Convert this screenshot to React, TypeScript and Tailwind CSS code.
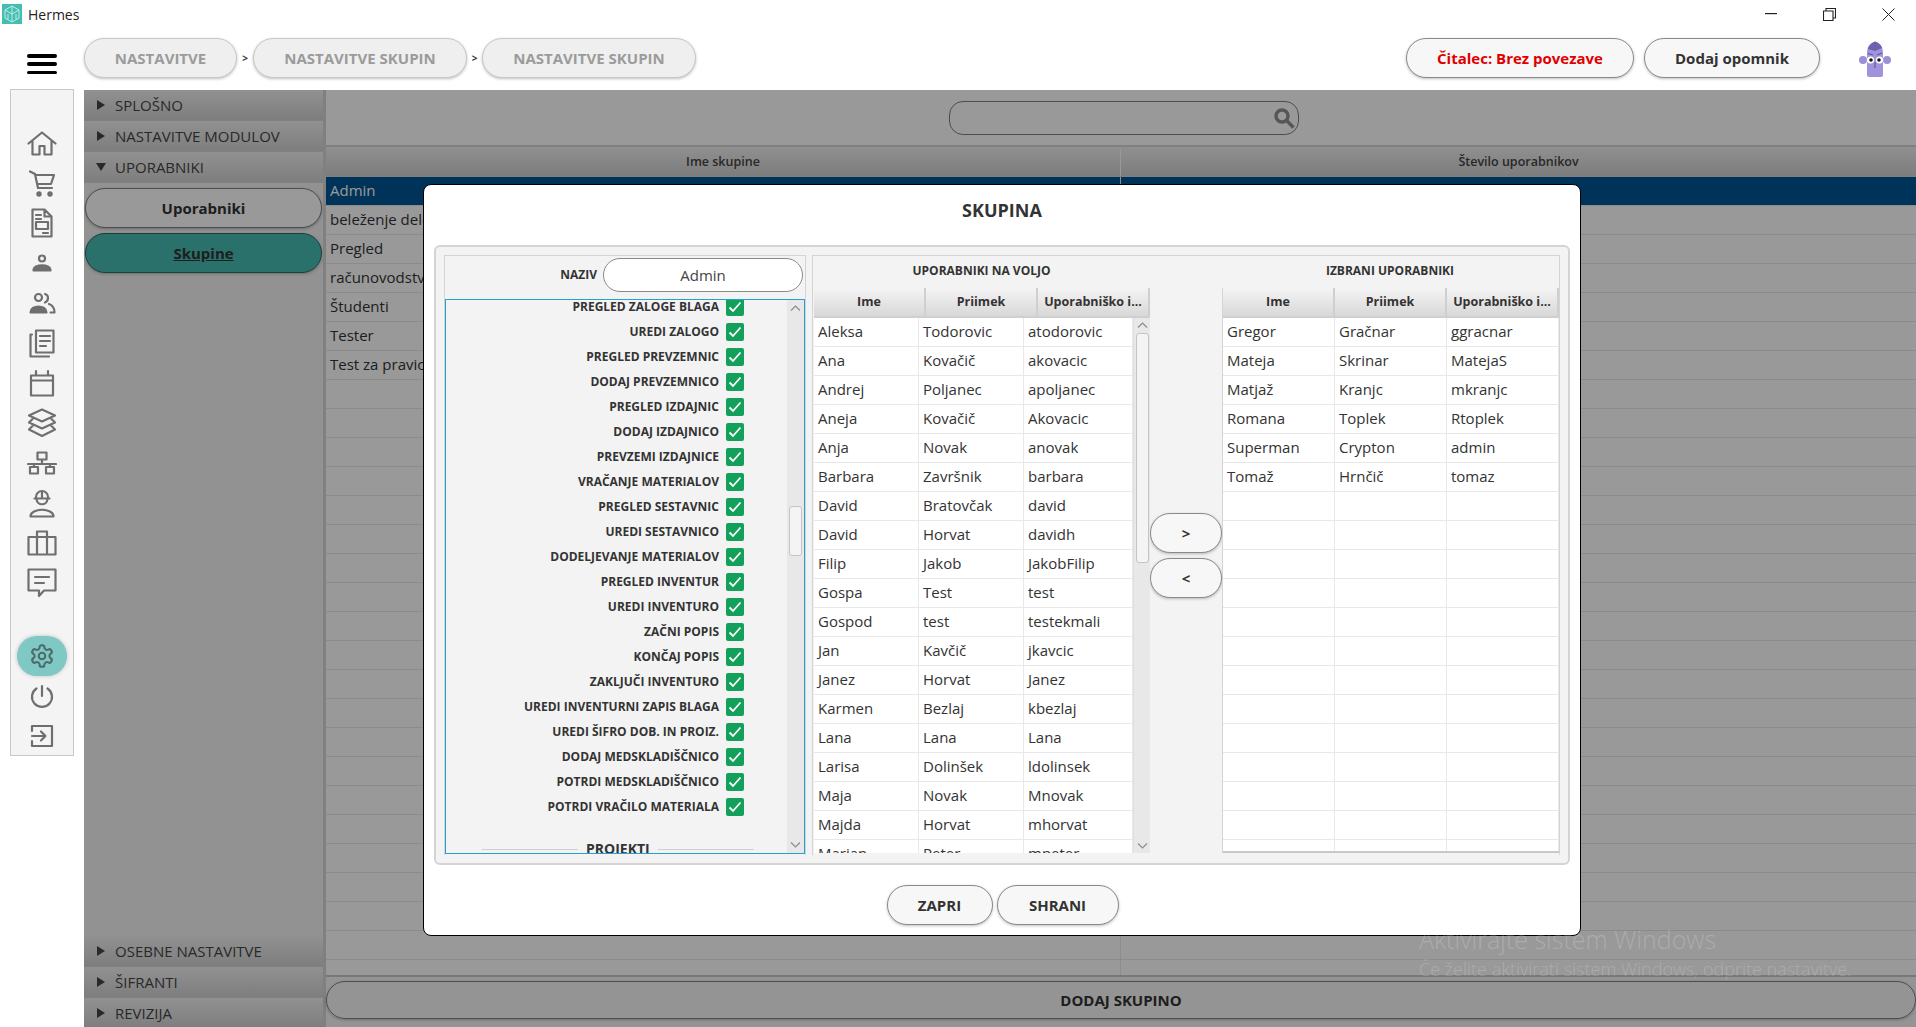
import type { ReactNode } from "react";

const permissions = [
	"PREGLED ZALOGE BLAGA",
	"UREDI ZALOGO",
	"PREGLED PREVZEMNIC",
	"DODAJ PREVZEMNICO",
	"PREGLED IZDAJNIC",
	"DODAJ IZDAJNICO",
	"PREVZEMI IZDAJNICE",
	"VRAČANJE MATERIALOV",
	"PREGLED SESTAVNIC",
	"UREDI SESTAVNICO",
	"DODELJEVANJE MATERIALOV",
	"PREGLED INVENTUR",
	"UREDI INVENTURO",
	"ZAČNI POPIS",
	"KONČAJ POPIS",
	"ZAKLJUČI INVENTURO",
	"UREDI INVENTURNI ZAPIS BLAGA",
	"UREDI ŠIFRO DOB. IN PROIZ.",
	"DODAJ MEDSKLADIŠČNICO",
	"POTRDI MEDSKLADIŠČNICO",
	"POTRDI VRAČILO MATERIALA",
];

const available = [
	["Aleksa", "Todorovic", "atodorovic"],
	["Ana", "Kovačič", "akovacic"],
	["Andrej", "Poljanec", "apoljanec"],
	["Aneja", "Kovačič", "Akovacic"],
	["Anja", "Novak", "anovak"],
	["Barbara", "Završnik", "barbara"],
	["David", "Bratovčak", "david"],
	["David", "Horvat", "davidh"],
	["Filip", "Jakob", "JakobFilip"],
	["Gospa", "Test", "test"],
	["Gospod", "test", "testekmali"],
	["Jan", "Kavčič", "jkavcic"],
	["Janez", "Horvat", "Janez"],
	["Karmen", "Bezlaj", "kbezlaj"],
	["Lana", "Lana", "Lana"],
	["Larisa", "Dolinšek", "ldolinsek"],
	["Maja", "Novak", "Mnovak"],
	["Majda", "Horvat", "mhorvat"],
	["Marian", "Peter", "mpeter"],
];

const selected = [
	["Gregor", "Gračnar", "ggracnar"],
	["Mateja", "Skrinar", "MatejaS"],
	["Matjaž", "Kranjc", "mkranjc"],
	["Romana", "Toplek", "Rtoplek"],
	["Superman", "Crypton", "admin"],
	["Tomaž", "Hrnčič", "tomaz"],
	...Array.from({ length: 13 }, () => ["", "", ""]),
];

const groups = [
	"Admin",
	"beleženje delovnega časa",
	"Pregled",
	"računovodstvo",
	"Študenti",
	"Tester",
	"Test za pravice",
	...Array.from({ length: 21 }, () => ""),
];

function Svg({ w, h, children }: { w: number; h: number; children: ReactNode }) {
	return (
		<svg
			width={w}
			height={h}
			viewBox={`0 0 ${w} ${h}`}
			fill="none"
			stroke="#6f6f6f"
			strokeWidth="2.2"
			strokeLinecap="round"
			strokeLinejoin="round">
			{children}
		</svg>
	);
}

const railIcons = [
	<Svg w={30} h={25} key="home">
		<path d="M1.500 12.500 15 1.500l13.500 11M5.500 10v13.500h7V15h5v8.500h7V10" />
	</Svg>,
	<Svg w={26} h={27} key="cart">
		<path d="M1 1.500 6 4l3 14h14M6 5h19l-3 9H8.500" />
		<circle cx="10" cy="24" r="1.600" fill="#6f6f6f" />
		<circle cx="21" cy="24" r="1.600" fill="#6f6f6f" />
	</Svg>,
	<Svg w={22} h={30} key="doc">
		<path d="M1.500 1.500h12l7 7v20h-19zM13.500 1.500v7h7M5 7h5M5 11h5M5 14h12v7H5zM12 25h5" />
	</Svg>,
	<Svg w={20} h={18} key="user">
		<circle cx="10" cy="4.500" r="3" />
		<path d="M1.500 16.500c0-7 17-7 17 0z" fill="#6f6f6f" />
	</Svg>,
	<Svg w={27} h={22} key="users">
		<circle cx="9.500" cy="5.500" r="3.500" />
		<path d="M1.500 20.500c0-8 16-8 16 0z" fill="#6f6f6f" />
		<path d="M16 2c4 1 4 7 0 8.500M20 12c3 1 5.500 3.500 5.500 8.500h-4" />
	</Svg>,
	<Svg w={26} h={29} key="news">
		<path d="M7 1.500h17.500v22H7zM3 5.500H1.500v22H20M11 7h10M11 12h10M11 17h6" />
	</Svg>,
	<Svg w={26} h={28} key="calendar">
		<path d="M2 6.500h22v20H2zM2 11.500h22M7 6.500V2M19 6.500V2" />
	</Svg>,
	<Svg w={30} h={30} key="layers">
		<path d="m15 1.500 13 6-13 6-13-6zM6 10.500l-4 4 13 6 13-6-4-4M6 17.500l-4 4 13 6.500 13-6.500-4-4" />
	</Svg>,
	<Svg w={30} h={24} key="network">
		<path d="M10.500 1.500h9v7h-9zM15 8.500V13M1 13h28M7 13v3M23 13v3M3 16h8v6.500H3zM19 16h8v6.500h-8z" />
	</Svg>,
	<Svg w={26} h={29} key="worker">
		<path d="M7 9.500V8a6 6 0 0 1 12 0v1.500M5.500 9.500h15M13 2v7.500M7.500 10c.5 7 10.500 7 11 0M1.500 27.500c0-9 23-9 23 0z" />
	</Svg>,
	<Svg w={30} h={26} key="case">
		<path d="M1.500 7h27v17.500h-27zM10 7V1.500h10V7M10 7v17.500M20 7v17.500" />
	</Svg>,
	<Svg w={30} h={30} key="chat">
		<path d="M1.500 1.500h27v21H17l-5 5.500v-5.500H1.500zM8 9h14M8 15h9" />
	</Svg>,
];

function GearIcon() {
	return (
		<svg width="26" height="26" viewBox="0 0 24 24" fill="none" stroke="#4b6a69" strokeWidth="1.900" strokeLinecap="round" strokeLinejoin="round">
			<path d="M12.220 2h-.440a2 2 0 0 0-2 2v.180a2 2 0 0 1-1 1.730l-.430.250a2 2 0 0 1-2 0l-.150-.080a2 2 0 0 0-2.730.730l-.220.380a2 2 0 0 0 .730 2.730l.150.100a2 2 0 0 1 1 1.720v.510a2 2 0 0 1-1 1.740l-.150.090a2 2 0 0 0-.730 2.730l.220.380a2 2 0 0 0 2.730.730l.150-.080a2 2 0 0 1 2 0l.430.250a2 2 0 0 1 1 1.730V20a2 2 0 0 0 2 2h.440a2 2 0 0 0 2-2v-.180a2 2 0 0 1 1-1.730l.430-.250a2 2 0 0 1 2 0l.150.080a2 2 0 0 0 2.730-.730l.220-.390a2 2 0 0 0-.730-2.730l-.150-.080a2 2 0 0 1-1-1.740v-.500a2 2 0 0 1 1-1.740l.150-.090a2 2 0 0 0 .730-2.730l-.220-.380a2 2 0 0 0-2.730-.730l-.150.080a2 2 0 0 1-2 0l-.430-.250a2 2 0 0 1-1-1.730V4a2 2 0 0 0-2-2z" />
			<circle cx="12" cy="12" r="3" />
		</svg>
	);
}

function Pill({ className, children }: { className: string; children: ReactNode }) {
	return (
		<div className={`flex items-center justify-center rounded-full border shadow-[0_1px_3px_rgba(0,0,0,0.25)] ${className}`}>
			{children}
		</div>
	);
}

function AccordionHead({ label, open }: { label: string; open?: boolean }) {
	return (
		<div className="flex h-[31px] shrink-0 items-center border-b border-[#d8d8d8] bg-linear-to-b from-[#f2f2f2] to-[#d2d2d2] text-[15px] text-[#454545]">
			{open ? (
				<svg width="10" height="8" viewBox="0 0 10 8" className="ml-[12px] mr-[9px]">
					<path d="M0 0h10L5 8z" fill="#454545" />
				</svg>
			) : (
				<svg width="8" height="10" viewBox="0 0 8 10" className="ml-[13px] mr-[10px]">
					<path d="M0 0v10l8-5z" fill="#454545" />
				</svg>
			)}
			{label}
		</div>
	);
}

function HeaderCell({ label, className }: { label: string; className: string }) {
	return (
		<div className={`flex items-center justify-center border-r-2 border-b-2 border-[#cfcfcf] bg-linear-to-b from-[#f4f4f4] to-[#d8d8d8] pt-[1px] text-[12.500px] font-bold text-[#333] ${className}`}>
			{label}
		</div>
	);
}

function UserRows({ rows, cols }: { rows: string[][]; cols: string[] }) {
	return (
		<div className="min-w-0 flex-1 overflow-hidden bg-white">
			{rows.map((row, i) => (
				<div key={i} className="flex h-[29px] border-b border-[#e8e8e8]">
					{row.map((cell, j) => (
						<div key={j} className={`flex items-center border-r border-[#e8e8e8] pb-[2px] pl-[4px] text-[15px] text-[#333] ${cols[j]}`}>
							{cell}
						</div>
					))}
				</div>
			))}
		</div>
	);
}

function Chevron({ up }: { up?: boolean }) {
	return (
		<svg width="13" height="8" viewBox="0 0 13 8" fill="none" stroke="#8d8d8d" strokeWidth="1.200">
			<path d={up ? "M2 6.500 6.500 2l4.500 4.500" : "M2 1.500 6.500 6l4.500-4.500"} />
		</svg>
	);
}

export default function App() {
	return (
		<div className="relative flex h-[1027px] w-[1916px] flex-col overflow-hidden bg-white font-['Open_Sans',sans-serif]">
			{/* Window title bar */}
			<div className="flex h-[34px] shrink-0 items-start">
				<div className="ml-[2px] mt-[4px] flex h-[20px] w-[20px] items-center justify-center bg-[#45bdb0]">
					<svg width="16" height="18" viewBox="0 0 16 18" fill="none" stroke="#bfeee8" strokeWidth="1">
						<path d="M8 1 15 5v8l-7 4-7-4V5zM8 1v16M1 5l7 4 7-4M4 9v5M12 9v5" />
					</svg>
				</div>
				<span className="ml-[6px] mt-[5px] text-[14px] leading-[20px] text-[#222]">Hermes</span>
				<div className="ml-auto flex h-[28px] items-center pr-[21px]">
					<svg width="12" height="2" viewBox="0 0 12 2" className="mr-[46px]">
						<rect width="12" height="1.200" fill="#222" />
					</svg>
					<svg width="13" height="13" viewBox="0 0 13 13" fill="none" stroke="#222" strokeWidth="1.100" className="mr-[46px]">
						<path d="M.5 3h9.500v9.500H.5zM3 3V.5h9.500V10H10" />
					</svg>
					<svg width="13" height="13" viewBox="0 0 13 13" fill="none" stroke="#222" strokeWidth="1">
						<path d="m.5.5 12 12M12.500.5l-12 12" />
					</svg>
				</div>
			</div>

			{/* Toolbar */}
			<div className="flex h-[56px] shrink-0 items-start pt-[4px]">
				<div className="ml-[27px] mt-[16px] flex h-[20px] w-[30px] flex-col justify-between">
					<div className="h-[3.500px] rounded-full bg-black" />
					<div className="h-[3.500px] rounded-full bg-black" />
					<div className="h-[3.500px] rounded-full bg-black" />
				</div>
				<Pill className="ml-[27px] h-[40px] w-[153px] border-[#c8c8c8] bg-[#efefef] text-[15px] font-bold text-[#9b9b9b]">NASTAVITVE</Pill>
				<span className="flex h-[40px] w-[16px] items-center justify-center text-[10px] font-bold text-[#333]">&gt;</span>
				<Pill className="h-[40px] w-[214px] border-[#c8c8c8] bg-[#efefef] text-[15px] font-bold text-[#9b9b9b]">NASTAVITVE SKUPIN</Pill>
				<span className="flex h-[40px] w-[15px] items-center justify-center text-[10px] font-bold text-[#333]">&gt;</span>
				<Pill className="h-[40px] w-[214px] border-[#c8c8c8] bg-[#efefef] text-[15px] font-bold text-[#9b9b9b]">NASTAVITVE SKUPIN</Pill>
				<Pill className="ml-auto h-[40px] w-[228px] border-[#8a8a8a] bg-[#f7f7f7] text-[15px] font-bold text-[#e00000]">Čitalec: Brez povezave</Pill>
				<Pill className="ml-[10px] h-[40px] w-[176px] border-[#8a8a8a] bg-[#f7f7f7] text-[15px] font-bold text-[#333]">Dodaj opomnik</Pill>
				<svg width="34" height="38" viewBox="0 0 34 38" className="ml-[38px] mr-[24px] mt-[2px]">
					<circle cx="5" cy="20" r="4" fill="#9b8fd8" />
					<circle cx="29" cy="20" r="4" fill="#9b8fd8" />
					<path d="M9 12Q9 4 17 1.500 25 4 25 12v23a2 2 0 0 1-2 2H11a2 2 0 0 1-2-2z" fill="#a093dc" />
					<path d="M10 9Q11 4 17 1.500 23 4 24 8l-7 3z" fill="#6d60b0" />
					<circle cx="12.500" cy="20" r="3.600" fill="#fff" />
					<circle cx="21.500" cy="20" r="3.600" fill="#fff" />
					<circle cx="13" cy="20" r="1.800" fill="#111" />
					<circle cx="21" cy="20" r="1.800" fill="#111" />
					<path d="M17 22v6" stroke="#5a4e9a" strokeWidth="1" />
					<path d="M10 13.500 15 15M24 13 19 15" stroke="#5a4e9a" strokeWidth="1" />
				</svg>
			</div>

			{/* Body */}
			<div className="flex min-h-0 flex-1">
				{/* Icon rail */}
				<div className="ml-[10px] -mt-px mb-[271px] flex w-[64px] shrink-0 flex-col items-center border border-[#c8c8c8] bg-[#f4f4f4] pt-[33px]">
					{railIcons.map((icon, i) => (
						<div key={i} className="flex h-[40px] w-full shrink-0 items-center justify-center">
							{icon}
						</div>
					))}
					<div className="mt-[33px] flex h-[40px] w-[50px] shrink-0 items-center justify-center rounded-full bg-[#7fc8c4] shadow-[0_0_4px_rgba(0,0,0,0.2)]">
						<GearIcon />
					</div>
					<div className="flex h-[40px] w-full shrink-0 items-center justify-center">
						<Svg w={24} h={24}>
							<path d="M12 2v10M6.500 4.500a10 10 0 1 0 11 0" />
						</Svg>
					</div>
					<div className="flex h-[40px] w-full shrink-0 items-center justify-center">
						<Svg w={24} h={24}>
							<path d="M2 7V2h20v20H2v-5M2 12h13M11 7.500l4.500 4.500-4.500 4.500" />
						</Svg>
					</div>
				</div>

				{/* Main area, dimmed while the dialog is open */}
				<div className="relative ml-[10px] flex min-w-0 flex-1">
					<div className="-mb-[2px] flex w-[239px] shrink-0 flex-col bg-[#f3f3f3]">
						<AccordionHead label="SPLOŠNO" />
						<AccordionHead label="NASTAVITVE MODULOV" />
						<AccordionHead label="UPORABNIKI" open />
						<div className="flex flex-1 flex-col gap-[5px] px-px pt-[5px]">
							<Pill className="h-[40px] border-[#808080] bg-white text-[15px] font-bold text-[#333]">Uporabniki</Pill>
							<Pill className="h-[40px] border-[#2a6d68] bg-[#46bbb2] text-[15px] font-bold text-[#333] underline">Skupine</Pill>
						</div>
						<AccordionHead label="OSEBNE NASTAVITVE" />
						<AccordionHead label="ŠIFRANTI" />
						<AccordionHead label="REVIZIJA" />
					</div>

					<div className="flex min-w-0 flex-1 flex-col border-l-[3px] border-[#d5d5d5] bg-white">
						<div className="flex h-[55px] shrink-0 items-center justify-center pl-[6px]">
							<div className="flex h-[34px] w-[350px] items-center justify-end rounded-[14px] border border-[#808080] pr-[3px]">
								<svg width="22" height="22" viewBox="0 0 22 22" fill="none" stroke="#8f8f8f" strokeWidth="3.400">
									<circle cx="9" cy="9" r="6" />
									<path d="m13.500 13.500 7 7" />
								</svg>
							</div>
						</div>
						<div className="min-h-0 flex-1 overflow-hidden border-t-2 border-[#d5d5d5]">
							<div className="flex h-[30px] border-b border-[#d5d5d5] bg-linear-to-b from-[#f0f0f0] to-[#d0d0d0] pt-[2px] text-[12.500px] font-semibold text-[#444]">
								<div className="flex w-[795px] items-center justify-center border-r border-white">Ime skupine</div>
								<div className="flex flex-1 items-center justify-center">Število uporabnikov</div>
							</div>
							{groups.map((name, i) => (
								<div
									key={i}
									className={`flex h-[29px] items-center border-b border-[#e8e8e8] text-[15px] ${i === 0 ? "bg-[#005594] text-white" : "bg-white text-[#333]"}`}>
									<div className="flex h-full w-[795px] items-center border-r border-[#ececec] pb-[2px] pl-[4px]">{name}</div>
								</div>
							))}
						</div>
						<div className="flex h-[52px] shrink-0 items-start border-t-2 border-[#c8c8c8] bg-[#f7f7f7] pt-[4px]">
							<Pill className="h-[38px] w-full border-[#808080] text-[15px] font-bold text-[#333]">DODAJ SKUPINO</Pill>
						</div>
					</div>

					<div className="absolute inset-0 bg-black/40" />
				</div>
			</div>

			{/* Dialog */}
			<div className="absolute left-[423px] top-[184px] flex h-[752px] w-[1158px] flex-col rounded-[8px] border border-black bg-white">
				<div className="flex h-[60px] shrink-0 items-center justify-center pb-[9px] text-[18px] font-bold text-[#333]">SKUPINA</div>
				<div className="mx-[10px] flex h-[620px] shrink-0 gap-[6px] rounded-[6px] border-2 border-[#d4d4d4] bg-[#f3f3f3] p-[8px]">
					{/* Permissions */}
					<div className="flex w-[362px] shrink-0 flex-col border-t border-l border-r border-[#d4d4d4]">
						<div className="flex h-[43px] shrink-0 items-start justify-end pr-[2px] pt-[2px]">
							<span className="mr-[6px] text-[12px] font-bold leading-[34px] text-[#333]">NAZIV</span>
							<div className="flex h-[34px] w-[200px] items-center justify-center rounded-full border border-[#8a8a8a] bg-white text-[15px] text-[#444]">Admin</div>
						</div>
						<div className="flex h-[555px] shrink-0 overflow-hidden border border-[#1fa3d6]">
							<div className="-mt-[2px] min-w-0 flex-1">
								{permissions.map((name) => (
									<div key={name} className="flex h-[25px] items-start justify-end pr-[43px]">
										<span className="mr-[7px] text-[12px] font-bold leading-[18px] text-[#333]">{name}</span>
										<div className="flex h-[18px] w-[18px] items-center justify-center rounded-[2px] bg-[#13a05a]">
											<svg width="14" height="12" viewBox="0 0 14 12" fill="none" stroke="#fff" strokeWidth="1.800">
												<path d="m1.500 6.500 3.500 3.500 7.500-8.500" />
											</svg>
										</div>
									</div>
								))}
								<div className="mt-[16px] flex h-[20px] items-center pl-[36px]">
									<div className="h-px w-[96px] bg-[#cfcfcf]" />
									<span className="mx-[8px] text-[14px] font-bold leading-[20px] text-[#333]">PROJEKTI</span>
									<div className="h-px w-[96px] bg-[#cfcfcf]" />
								</div>
							</div>
							<div className="relative flex w-[17px] shrink-0 flex-col items-center justify-between bg-[#e8e8e8] py-[4px]">
								<Chevron up />
								<div className="absolute left-[2px] top-[206px] h-[50px] w-[13px] rounded-[3px] border border-[#c4c4c4] bg-[#f4f4f4]" />
								<Chevron />
							</div>
						</div>
					</div>

					{/* User transfer tables */}
					<div className="flex min-w-0 flex-1 flex-col border-t border-l border-r border-[#d4d4d4] pb-[2px]">
						<div className="flex h-[32px] shrink-0 items-center">
							<div className="w-[337px] pb-[3px] text-center text-[12px] font-bold text-[#333]">UPORABNIKI NA VOLJO</div>
							<div className="w-[71px]" />
							<div className="flex-1 pb-[3px] text-center text-[12px] font-bold text-[#333]">IZBRANI UPORABNIKI</div>
						</div>
						<div className="flex min-h-0 flex-1">
							<div className="ml-px flex w-[336px] shrink-0 flex-col">
								<div className="flex h-[30px] shrink-0">
									<HeaderCell label="Ime" className="w-[112px]" />
									<HeaderCell label="Priimek" className="w-[112px]" />
									<HeaderCell label="Uporabniško i..." className="w-[112px]" />
								</div>
								<div className="flex min-h-0 flex-1">
									<UserRows rows={available} cols={["w-[105px]", "w-[105px]", "flex-1"]} />
									<div className="relative flex w-[17px] shrink-0 flex-col items-center justify-between border-l border-[#e0e0e0] bg-[#e8e8e8] py-[3px]">
										<Chevron up />
										<div className="absolute left-[2px] top-[15px] h-[230px] w-[13px] rounded-[3px] border border-[#c4c4c4] bg-[#f4f4f4]" />
										<Chevron />
									</div>
								</div>
							</div>
							<div className="flex w-[72px] shrink-0 flex-col gap-[5px] pt-[225px]">
								<Pill className="h-[40px] border-[#8a8a8a] bg-[#f7f7f7] text-[15px] font-bold text-[#333]">&gt;</Pill>
								<Pill className="h-[40px] border-[#8a8a8a] bg-[#f7f7f7] text-[15px] font-bold text-[#333]">&lt;</Pill>
							</div>
							<div className="flex min-w-0 flex-1 flex-col border-l border-[#d4d4d4]">
								<div className="flex h-[30px] shrink-0">
									<HeaderCell label="Ime" className="w-[112px]" />
									<HeaderCell label="Priimek" className="w-[112px]" />
									<HeaderCell label="Uporabniško i..." className="flex-1" />
								</div>
								<div className="flex min-h-0 flex-1 border-b-2 border-[#c8c8c8]">
									<UserRows rows={selected} cols={["w-[112px]", "w-[112px]", "flex-1"]} />
								</div>
							</div>
						</div>
					</div>
				</div>
				<div className="flex flex-1 items-start justify-center gap-[4px] pl-[1px] pt-[20px]">
					<Pill className="h-[40px] w-[106px] border-[#8a8a8a] bg-[#f7f7f7] text-[15px] font-bold text-[#333]">ZAPRI</Pill>
					<Pill className="h-[40px] w-[122px] border-[#8a8a8a] bg-[#f7f7f7] text-[15px] font-bold text-[#333]">SHRANI</Pill>
				</div>
			</div>

			{/* Windows activation watermark */}
			<div className="pointer-events-none absolute left-[1419px] top-[922px] font-light text-white/20">
				<div className="text-[25px] leading-[34px]">Aktivirajte sistem Windows</div>
				<div className="text-[18px] leading-[26px]">Če želite aktivirati sistem Windows, odprite nastavitve.</div>
			</div>
		</div>
	);
}
